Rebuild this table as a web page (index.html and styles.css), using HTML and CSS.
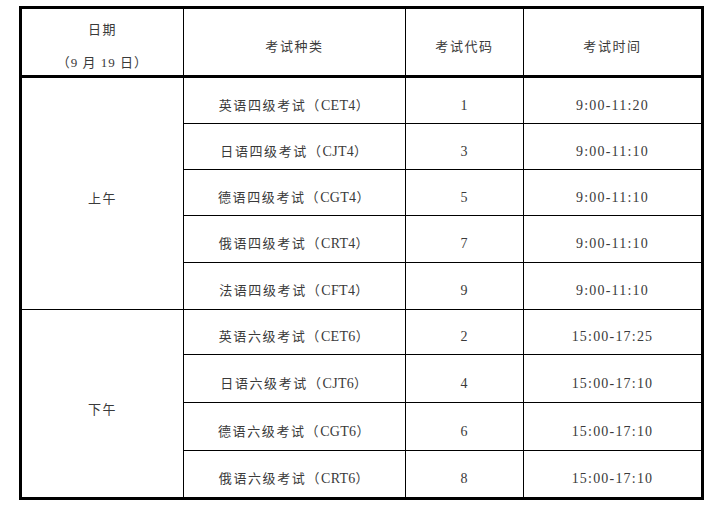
FILE: index.html
```html
<!DOCTYPE html>
<html lang="zh-CN">
<head>
<meta charset="utf-8">
<title>考试安排</title>
<link rel="stylesheet" href="styles.css">
</head>
<body>
<table class="exam">
  <colgroup>
    <col class="c1"><col class="c2"><col class="c3"><col class="c4">
  </colgroup>
  <thead>
    <tr class="head">
      <th class="date"><div class="l1">日期</div><div class="l2">（9 月 19 日）</div></th>
      <th>考试种类</th>
      <th>考试代码</th>
      <th class="last">考试时间</th>
    </tr>
  </thead>
  <tbody>
    <tr class="h46">
      <td class="period" rowspan="5">上午</td>
      <td>英语四级考试（<span class="lat">CET4</span>）</td><td class="num">1</td><td class="num last">9:00-11:20</td>
    </tr>
    <tr class="h46"><td>日语四级考试（<span class="lat">CJT4</span>）</td><td class="num">3</td><td class="num last">9:00-11:10</td></tr>
    <tr class="h46"><td>德语四级考试（<span class="lat">CGT4</span>）</td><td class="num">5</td><td class="num last">9:00-11:10</td></tr>
    <tr class="h47"><td>俄语四级考试（<span class="lat">CRT4</span>）</td><td class="num">7</td><td class="num last">9:00-11:10</td></tr>
    <tr class="h47"><td>法语四级考试（<span class="lat">CFT4</span>）</td><td class="num">9</td><td class="num last">9:00-11:10</td></tr>
    <tr class="h45">
      <td class="period pm" rowspan="4">下午</td>
      <td>英语六级考试（<span class="lat">CET6</span>）</td><td class="num">2</td><td class="num last">15:00-17:25</td>
    </tr>
    <tr class="h48"><td>日语六级考试（<span class="lat">CJT6</span>）</td><td class="num">4</td><td class="num last">15:00-17:10</td></tr>
    <tr class="h48"><td>德语六级考试（<span class="lat">CGT6</span>）</td><td class="num">6</td><td class="num last">15:00-17:10</td></tr>
    <tr class="h46 end"><td>俄语六级考试（<span class="lat">CRT6</span>）</td><td class="num">8</td><td class="num last">15:00-17:10</td></tr>
  </tbody>
</table>
</body>
</html>
```

FILE: styles.css
```css
html, body {
  margin: 0;
  padding: 0;
  background: #ffffff;
}

body {
  font-family: "Liberation Serif", "Noto Sans CJK SC", serif;
  color: #3a3a3a;
}

.exam {
  margin: 6px 0 0 19px;
  border: 3px solid #000;
  border-collapse: separate;
  border-spacing: 0;
  table-layout: fixed;
  width: 685px;
}

.c1 { width: 162px; }
.c2 { width: 222px; }
.c3 { width: 118px; }
.c4 { width: 177px; }

.exam th,
.exam td {
  border-right: 1px solid #000;
  border-bottom: 1px solid #000;
  padding: 10px 0 0 0;
  text-align: center;
  vertical-align: middle;
  font-size: 13px;
  font-weight: 400;
  letter-spacing: 1.6px;
  line-height: 16px;
  white-space: nowrap;
}

.exam td .lat {
  font-size: 14px;
  letter-spacing: 0.3px;
}

.exam th.last,
.exam td.last {
  border-right: none;
}

.head { height: 69px; }
.head th {
  border-bottom: 3px solid #000;
  padding-top: 9px;
}

.date .l1 { margin-bottom: 17px; }
.date .l2 { letter-spacing: 1px; }

.h45 { height: 45px; }
.h46 { height: 46px; }
.h47 { height: 47px; }
.h48 { height: 48px; }

.end td { border-bottom: none; }
.period { padding-top: 14px; }
.period.pm { border-bottom: none; padding-top: 12px; }

.exam td.num {
  font-size: 14px;
  letter-spacing: 1.2px;
}
```
